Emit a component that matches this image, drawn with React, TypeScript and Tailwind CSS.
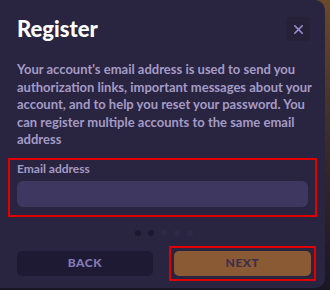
import { X } from 'lucide-react';

export default function App() {
  return (
    <div className="w-[330px] h-[290px] overflow-hidden bg-gradient-to-b from-[#6b4a2a] via-[#3a2a2a] to-[#1a1626] flex" style={{ fontFamily: 'Lato, "Noto Sans", sans-serif' }}>
      <div className="w-[325px] h-[288px] bg-[#29243f] rounded-br-[10px] rounded-tr-[10px] flex flex-col">
        {/* header */}
        <div className="flex items-center justify-between pl-[17px] pr-[15px] pt-[14px]">
          <h1 className="text-[22px] leading-[30px] font-black text-white">Register</h1>
          <button className="w-[24px] h-[24px] flex items-center justify-center rounded bg-[#262139] text-[#9b91d0]">
            <X size={15} strokeWidth={2.5} />
          </button>
        </div>

        <p className="pl-[17px] pr-[4px] mt-[17px] text-[13px] leading-[17.6px] font-bold text-[#a49bc6] whitespace-nowrap">
          Your account's email address is used to send you<br />
          authorization links, important messages about your<br />
          account, and to help you reset your password. You<br />
          can register multiple accounts to the same email<br />
          address
        </p>

        <div className="mx-[8px] mt-[9px] border-2 border-[#e00000] px-[7px] pt-[1px] pb-[8px]">
          <label className="block text-[12px] leading-[16px] font-bold text-[#a49bc6] mb-[4px]">Email address</label>
          <input className="block w-full h-[26px] rounded-[6px] bg-[#3e3860] outline-none" />
        </div>

        <div className="flex justify-center gap-[7px] mt-[13px] pl-[2px]">
          <span className="w-[6px] h-[6px] rounded-full bg-[#1c182e]" />
          <span className="w-[6px] h-[6px] rounded-full bg-[#1c182e]" />
          <span className="w-[6px] h-[6px] rounded-full bg-[#2e2947]" />
          <span className="w-[6px] h-[6px] rounded-full bg-[#2e2947]" />
          <span className="w-[6px] h-[6px] rounded-full bg-[#2e2947]" />
        </div>

        <div className="flex items-center mt-[10px] pl-[17px] pr-[9px]">
          <button className="w-[136px] h-[25px] rounded-[5px] bg-[#1e1a33] text-[#847bb6] text-[12px] font-black tracking-wider">BACK</button>
          <div className="ml-auto flex border-2 border-[#e00000] p-[3px]">
            <button className="w-[137px] h-[25px] rounded-[5px] bg-[#8a5a34] text-[#3b3049] text-[12px] font-black tracking-wider">NEXT</button>
          </div>
        </div>
      </div>
    </div>
  );
}
